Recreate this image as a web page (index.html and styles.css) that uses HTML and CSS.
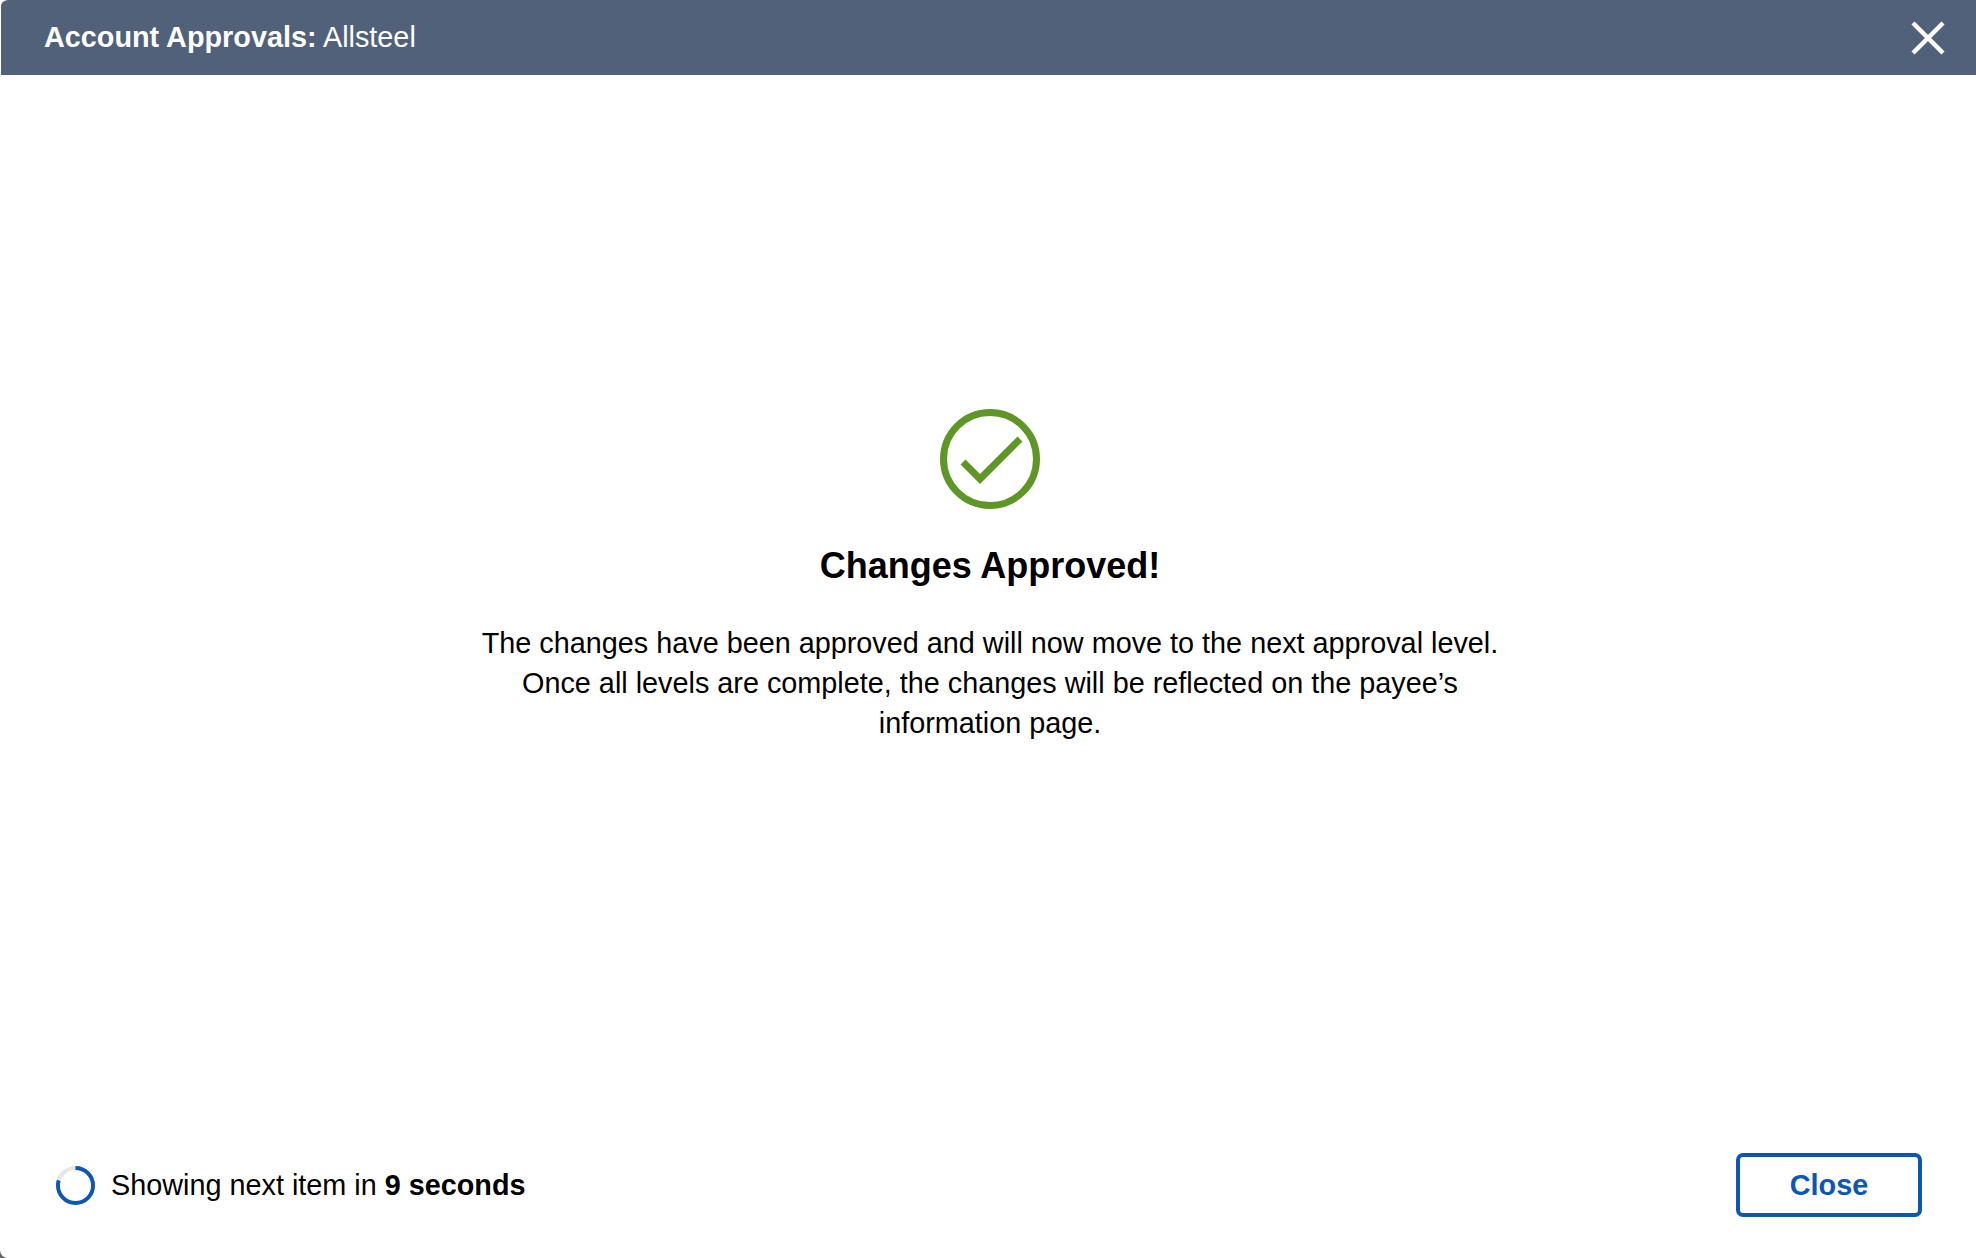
FILE: index.html
```html
<!DOCTYPE html>
<html lang="en">
<head>
<meta charset="utf-8">
<title>Account Approvals</title>
<link rel="stylesheet" href="styles.css">
</head>
<body>
<div class="dialog">
  <header class="head">
    <h1 class="head-title"><strong>Account Approvals:</strong> Allsteel</h1>
    <svg class="head-close" viewBox="0 0 34 34" aria-label="Close"><path d="M2 2 32 32M32 2 2 32"/></svg>
  </header>
  <main class="body">
    <svg class="ok" viewBox="0 0 100 100"><circle cx="50" cy="50" r="46.5"/><path d="M23 53 40 70 80 30"/></svg>
    <h2 class="body-title">Changes Approved!</h2>
    <p class="body-text">The changes have been approved and will now move to the next approval level.<br>Once all levels are complete, the changes will be reflected on the payee’s<br>information page.</p>
  </main>
  <footer class="foot">
    <div class="timer">
      <svg class="spin" viewBox="0 0 40 40"><circle class="spin-bg" cx="20" cy="20" r="18"/><circle class="spin-arc" cx="20" cy="20" r="18" pathLength="360" stroke-dasharray="287 360" transform="rotate(-90 20 20)"/></svg>
      <span>Showing next item in <strong>9 seconds</strong></span>
    </div>
    <button class="btn" type="button">Close</button>
  </footer>
</div>
</body>
</html>
```

FILE: styles.css
```css
* { box-sizing: border-box; }
html, body { margin: 0; height: 100%; }
body { background: linear-gradient(#fff 50%, #666 50%); font-family: "Liberation Sans", Arial, sans-serif; color: #000; overflow: hidden; }
.dialog { width: 1976px; height: 1258px; padding-left: 1px; display: flex; flex-direction: column; background: #fff; border-radius: 8px 0 0 8px; overflow: hidden; }
.head { height: 75px; flex: none; background: #52617a; border-top-left-radius: 6px; display: flex; align-items: center; justify-content: space-between; padding: 0 31px 0 43px; color: #fff; }
.head-title { margin: 0; font-size: 28.8px; font-weight: 400; }
.head-close { width: 34px; height: 34px; fill: none; stroke: #fff; stroke-width: 4.5; }
.body { flex: 1; display: flex; flex-direction: column; align-items: center; padding: 334px 0 0 3px; }
.ok { width: 100px; height: 100px; fill: none; stroke: #5f9726; stroke-width: 7; }
.body-title { margin: 35px 0 0; font-size: 36px; line-height: 44px; font-weight: 700; }
.body-text { margin: 35px 0 0; font-size: 28.8px; line-height: 40px; text-align: center; }
.foot { height: 105px; flex: none; display: flex; align-items: flex-start; justify-content: space-between; padding: 0 54px 0 55px; }
.timer { display: flex; align-items: center; gap: 16px; height: 64px; font-size: 28.8px; }
.spin { width: 39px; height: 39px; fill: none; stroke-width: 4; }
.spin-bg { stroke: #e6e6e6; }
.spin-arc { stroke: #0b57b5; }
.btn { width: 186px; height: 64px; background: #fff; border: 4px solid #0b57b5; border-radius: 7px; color: #0b57b5; font: 700 28.8px "Liberation Sans", Arial, sans-serif; padding: 0; }
```
